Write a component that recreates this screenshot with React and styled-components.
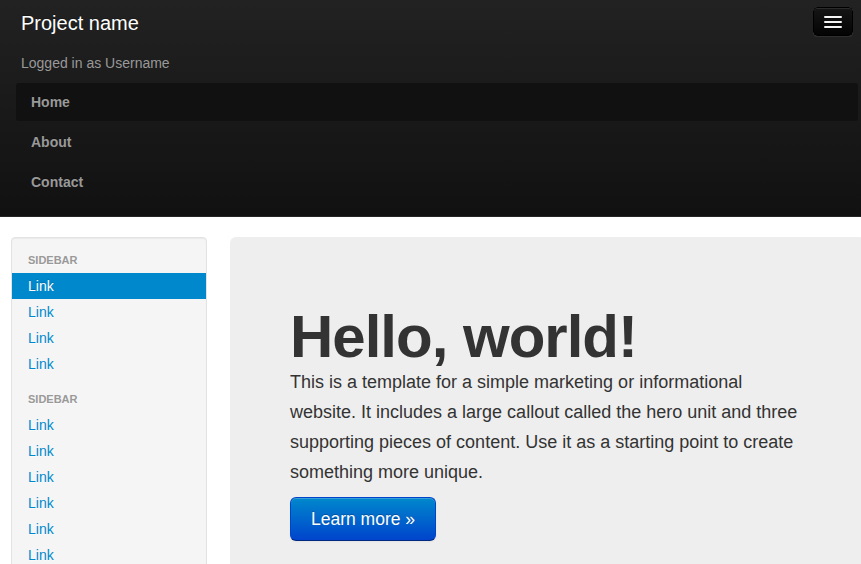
import styled, { createGlobalStyle } from "styled-components";

const GlobalStyle = createGlobalStyle`
  html, body {
    margin: 0;
    padding: 0;
    overflow: hidden;
    background: #fff;
    font-family: "Liberation Sans", Arial, sans-serif;
    font-size: 14px;
    line-height: 20px;
    color: #333;
  }
`;

function App() {
  const groups = [4, 6];

  return (
    <Page>
      <GlobalStyle />
      <Navbar>
        <NavTop>
          <Brand>Project name</Brand>
          <Toggle aria-label="menu">
            <Bar />
            <Bar />
            <Bar />
          </Toggle>
        </NavTop>
        <LoggedIn>Logged in as Username</LoggedIn>
        <NavList>
          <NavItem $active>Home</NavItem>
          <NavItem>About</NavItem>
          <NavItem>Contact</NavItem>
        </NavList>
      </Navbar>

      <Content>
        <Sidebar>
          {groups.map((count, g) => (
            <SideGroup key={g}>
              <SideHeader>Sidebar</SideHeader>
              {Array.from({ length: count }).map((_, i) => (
                <SideLink key={i} $active={g === 0 && i === 0}>
                  Link
                </SideLink>
              ))}
            </SideGroup>
          ))}
        </Sidebar>

        <Hero>
          <Title>Hello, world!</Title>
          <Lead>
            This is a template for a simple marketing or informational website. It
            includes a large callout called the hero unit and three supporting pieces
            of content. Use it as a starting point to create something more unique.
          </Lead>
          <PrimaryButton>Learn more &raquo;</PrimaryButton>
        </Hero>
      </Content>
    </Page>
  );
}

const Page = styled.div`
  width: 861px;
  height: 564px;
  overflow: hidden;
`;

const Navbar = styled.header`
  height: 217px;
  box-sizing: border-box;
  padding: 0 3px 0 16px;
  background-image: linear-gradient(to bottom, #222222, #111111);
  border-bottom: 1px solid #252525;
`;

const NavTop = styled.div`
  display: flex;
  justify-content: space-between;
  align-items: flex-start;
  height: 46px;
`;

const Brand = styled.a`
  display: block;
  padding: 12px 0 0 5px;
  font-size: 20px;
  line-height: 22px;
  color: #fff;
  text-shadow: 0 -1px 0 rgba(0, 0, 0, 0.25);
`;

const Toggle = styled.button`
  display: flex;
  flex-direction: column;
  justify-content: center;
  gap: 3px;
  align-items: center;
  width: 40px;
  height: 29px;
  margin: 7px 5px 0 0;
  padding: 0;
  border: 1px solid #000;
  border-radius: 4px;
  background-image: linear-gradient(to bottom, #151515, #040404);
  box-shadow: inset 0 1px 0 rgba(255, 255, 255, 0.1), 0 1px 0 rgba(255, 255, 255, 0.075);
`;

const Bar = styled.span`
  display: block;
  width: 18px;
  height: 2px;
  border-radius: 1px;
  background: #f5f5f5;
  box-shadow: 0 1px 0 rgba(0, 0, 0, 0.25);
`;

const LoggedIn = styled.p`
  margin: 0;
  padding: 7px 0 0 5px;
  height: 30px;
  font-size: 14px;
  line-height: 20px;
  color: #999;
`;

const NavList = styled.ul`
  list-style: none;
  margin: 0;
  padding: 0;
`;

const NavItem = styled.li`
  margin: 0 0 2px;
  padding: 9px 15px;
  line-height: 20px;
  font-weight: bold;
  color: #999;
  border-radius: 3px;
  background: ${(p) => (p.$active ? "#111111" : "transparent")};
  text-shadow: 0 -1px 0 rgba(0, 0, 0, 0.25);
`;

const Content = styled.main`
  display: flex;
  align-items: flex-start;
  gap: 23px;
  padding: 20px 0 0 11px;
`;

const Sidebar = styled.nav`
  flex: 0 0 196px;
  box-sizing: border-box;
  padding: 9px 0;
  background: #f5f5f5;
  border: 1px solid #e3e3e3;
  border-radius: 4px;
  box-shadow: inset 0 1px 1px rgba(0, 0, 0, 0.05);
`;

const SideGroup = styled.div`
  & + & {
    margin-top: 9px;
  }
`;

const SideHeader = styled.div`
  padding: 3px 15px 3px 16px;
  font-size: 11px;
  font-weight: bold;
  line-height: 20px;
  color: #999;
  text-transform: uppercase;
  text-shadow: 0 1px 0 rgba(255, 255, 255, 0.5);
`;

const SideLink = styled.a`
  display: block;
  padding: 3px 15px 3px 16px;
  line-height: 20px;
  color: ${(p) => (p.$active ? "#fff" : "#0088cc")};
  background: ${(p) => (p.$active ? "#0088cc" : "transparent")};
  text-shadow: ${(p) => (p.$active ? "0 -1px 0 rgba(0,0,0,0.2)" : "0 1px 0 rgba(255,255,255,0.5)")};
`;

const Hero = styled.section`
  flex: 0 0 635px;
  box-sizing: border-box;
  padding: 60px;
  background: #eeeeee;
  border-radius: 6px;
`;

const Title = styled.h1`
  margin: 10px 0 0;
  font-size: 60px;
  line-height: 60px;
  font-weight: bold;
  letter-spacing: -1px;
  color: #333;
`;

const Lead = styled.p`
  margin: 0 0 10px;
  font-size: 18px;
  line-height: 30px;
  font-weight: 200;
  color: #333;
`;

const PrimaryButton = styled.button`
  padding: 11px 20px;
  font-family: inherit;
  font-size: 17.5px;
  line-height: 20px;
  color: #fff;
  text-shadow: 0 -1px 0 rgba(0, 0, 0, 0.25);
  background-image: linear-gradient(to bottom, #0088cc, #0044cc);
  border: 1px solid #0044cc;
  border-bottom-color: #002a80;
  border-radius: 6px;
  box-shadow: inset 0 1px 0 rgba(255, 255, 255, 0.2), 0 1px 2px rgba(0, 0, 0, 0.05);
`;

export default App;
